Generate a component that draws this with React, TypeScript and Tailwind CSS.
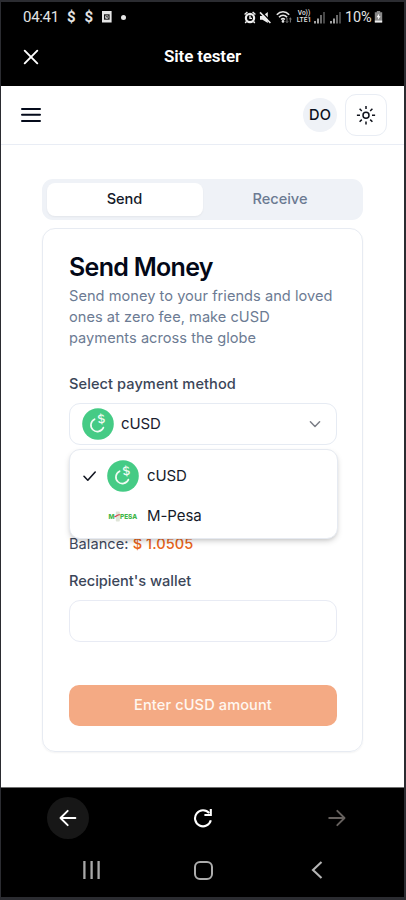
import React from 'react';

const inter = "font-['Inter','Liberation_Sans',sans-serif]";
const roboto = "font-['Roboto','Liberation_Sans',sans-serif]";

function CusdLogo() {
  return (
    <svg width="32" height="32" viewBox="0 0 32 32" className="shrink-0">
      <circle cx="16" cy="16" r="15.8" fill="#45cb85" />
      <path d="M12.6 11.2A6.5 6.5 0 1 0 21.4 19.6" fill="none" stroke="#f1fbf3" strokeWidth="1.7" strokeLinecap="round" />
      <text x="19.2" y="15.2" textAnchor="middle" fontFamily="Inter, sans-serif" fontSize="12" fontWeight="500" fill="#f1fbf3" transform="rotate(-8 19.2 11)">$</text>
    </svg>
  );
}

function MpesaLogo() {
  return (
    <svg width="32" height="16" viewBox="0 0 32 16" className="shrink-0">
      <rect x="8.8" y="3.6" width="4" height="10" rx="0.8" fill="#dfe5d8" />
      <g fontFamily="Inter, sans-serif" fontSize="6.8" fontWeight="800" fill="#42b649">
        <text x="1.4" y="10.5" textLength="6" lengthAdjust="spacingAndGlyphs">M</text>
        <text x="13" y="10.5" textLength="17.2" lengthAdjust="spacingAndGlyphs">PESA</text>
      </g>
      <path d="M7.4 8.7C9 8.7 9.8 6.8 12.8 6.6" fill="none" stroke="#d8434e" strokeWidth="1.3" />
    </svg>
  );
}

function Signal() {
  return (
    <svg width="11" height="13" viewBox="0 0 11 13" className="shrink-0">
      <path d="M1 12.5V10M4 12.5V7.5" stroke="#e6e6e6" strokeWidth="1.4" />
      <path d="M7 12.5V4" stroke="#a0a0a0" strokeWidth="1.3" />
      <path d="M10 12.5V1" stroke="#6c6c6c" strokeWidth="1.3" />
    </svg>
  );
}

function StatusBar() {
  return (
    <div className={`${roboto} flex h-[30px] items-center pl-[22px] pr-[21px] text-[#e4e4e4]`}>
      <span className="w-[44px] text-[15px] leading-5 tracking-[-0.3px]">04:41</span>
      <span className="w-[17.5px] text-[15px] font-bold leading-5">$</span>
      <span className="w-[17px] text-[15px] font-bold leading-5">$</span>
      <svg width="10" height="12" viewBox="0 0 10 12">
        <rect width="9.6" height="11.5" fill="#e6e6e6" />
        <path d="M2 3.3h5.6v5.4H2z" fill="#171717" />
        <circle cx="4.8" cy="6" r="1.9" fill="#bdbdbd" />
        <path d="M4.8 4.5V6H6" stroke="#111" strokeWidth=".8" fill="none" />
      </svg>
      <span className="ml-[9px] size-[5px] rounded-full bg-[#e6e6e6]" />
      <div className="ml-auto flex items-center">
        <svg width="12" height="13" viewBox="0 0 12 13">
          <circle cx="6" cy="7" r="4.1" fill="none" stroke="#eee" strokeWidth="2.2" />
          <path d="M.6 3.5 3.4 1M11.4 3.5 8.6 1M2.5 10.5 1.2 12M9.5 10.5l1.3 1.5M6 4.6V7.4h2" fill="none" stroke="#eee" strokeWidth="1.4" />
        </svg>
        <svg width="13" height="13" viewBox="0 0 13 13" className="ml-[3px]">
          <path d="M1 5h2.5L8.8 1v11L3.5 8.7H1z" fill="#eee" />
          <path d="M2.2 .6 12.4 11.1" stroke="#000" strokeWidth="1.4" />
          <path d="M1 1.4 11.4 12" stroke="#eee" strokeWidth="1.5" />
        </svg>
        <svg width="17" height="14" viewBox="0 0 17 14" className="ml-[4px]">
          <path d="M.8 4.7C4.4.8 9.6.8 13.2 4.7M3 7.2c2.5-2.7 5.7-2.7 8.1 0M5.1 9.5c1.2-1.2 2.6-1.2 3.8 0" fill="none" stroke="#e4e4e4" strokeWidth="1.6" />
          <circle cx="7" cy="11.4" r="1.3" fill="#e4e4e4" />
          <path d="M11 8v4.5M9.8 11.3 11 12.6l1.2-1.3M14.4 12.5V8M13.2 9.2 14.4 8l1.2 1.2" fill="none" stroke="#777" strokeWidth="1" />
        </svg>
        <span className="ml-[3px] flex w-[16px] flex-col items-center text-[6.6px] font-semibold leading-[7px] text-[#dedede]">
          <span className="h-[7px]">Vo))</span>
          <span className="h-[7px]">LTE1</span>
        </span>
        <span className="ml-[2px] flex gap-[5px]"><Signal /><Signal /></span>
        <span className="ml-[4px] mt-px w-[29px] text-[14.5px] leading-5 tracking-[-0.2px]">10%</span>
        <svg width="9" height="12" viewBox="0 0 9 12">
          <path d="M2.8 0h3.4v1.2h2V10.5H.8V1.2h2z" fill="#888" />
          <path d="M.8 9.6h7.4v2H.8z" fill="#eee" />
          <path d="M5.2 2.5 2.5 6.3h1.8L3.8 9l2.7-3.8H4.8z" fill="#fff" />
        </svg>
      </div>
    </div>
  );
}

function TitleBar() {
  return (
    <div className="grid h-[54px] grid-cols-[1fr_auto_1fr] items-center pb-1 pl-[22px] pr-[22px]">
      <svg width="16" height="16" viewBox="0 0 16 16" className="-mt-px">
        <path d="m1.7 1.7 12.6 12.6M14.3 1.7 1.7 14.3" stroke="#fff" strokeWidth="1.9" strokeLinecap="round" />
      </svg>
      <span className={`${roboto} -mt-[2px] text-[17px] font-semibold leading-5 tracking-[-0.15px] text-white`}>Site tester</span>
    </div>
  );
}

function Header() {
  return (
    <header className="flex h-[59px] items-center border-b border-[#e9edf5] pl-[20px] pr-[17px]">
      <svg width="20" height="16" viewBox="0 0 20 16">
        <path d="M1 2h18M1 7.7h18M1 14h18" stroke="#050b1b" strokeWidth="2" strokeLinecap="round" />
      </svg>
      <span className="ml-auto flex size-[34px] items-center justify-center rounded-full bg-[#eff2f7] pt-px text-[14.6px] font-medium tracking-[0.1px] text-[#0b1020]">DO</span>
      <button className="ml-[8px] flex size-[42px] items-center justify-center rounded-[11px] border border-[#e9edf4]">
        <svg width="20" height="20" viewBox="0 0 20 20" fill="none" stroke="#10131c" strokeWidth="1.5">
          <circle cx="10" cy="10.3" r="3" />
          <path d="M10 1v3M10 16.4v3M.9 10.2h3.1M16 10.2h3.1M3.6 3.8l2.2 2.2M14.2 14.6l2.2 2.2M3.6 16.8l2.2-2.2M14.2 6l2.2-2.2" />
        </svg>
      </button>
    </header>
  );
}

function PaymentSelect() {
  return (
    <div className="relative mt-[9px]">
      <div className="flex h-[42px] items-center rounded-[11px] border border-[#e6ebf3] pl-[12px] pr-[13px]">
        <CusdLogo />
        <span className="ml-[7px] text-[15px] leading-5 tracking-[-0.1px] text-[#1a2030]">cUSD</span>
        <svg width="16" height="16" viewBox="0 0 16 16" className="ml-auto">
          <path d="m3.4 5.7 4.6 4.7 4.6-4.7" fill="none" stroke="#7b7e86" strokeWidth="1.5" strokeLinecap="round" strokeLinejoin="round" />
        </svg>
      </div>
      <div className="absolute left-0 right-[-1px] top-[46px] z-10 h-[90px] rounded-[11px] border border-[#e6eaf1] bg-white pt-[5px] text-[15px] text-[#151b2a] shadow-[0_3px_6px_-1px_rgba(0,0,0,0.18),0_2px_4px_-2px_rgba(0,0,0,0.12)]">
        <div className="flex h-[42px] items-center pl-[12px]">
          <svg width="16" height="16" viewBox="0 0 16 16" className="mr-[9px]">
            <path d="m2 8.3 3.8 3.9 7.4-8.2" fill="none" stroke="#131722" strokeWidth="1.6" strokeLinecap="round" strokeLinejoin="round" />
          </svg>
          <CusdLogo />
          <span className="ml-[8px] leading-5 tracking-[-0.1px]">cUSD</span>
        </div>
        <div className="flex h-[37px] items-center pl-[37px]">
          <MpesaLogo />
          <span className="ml-[8px] leading-5 tracking-[-0.05px]">M-Pesa</span>
        </div>
      </div>
    </div>
  );
}

function SendCard() {
  return (
    <section className="mt-[8px] h-[524px] rounded-[13px] border border-[#e7ebf2] pl-[26px] pr-[25px] pt-[26px] shadow-[0_1px_2px_rgba(0,0,0,0.05)]">
      <h1 className="h-[25px] whitespace-nowrap text-[25px] font-semibold leading-[24px] tracking-[-0.7px] text-[#030817]">Send Money</h1>
      <p className="mt-[6px] whitespace-nowrap text-[14.6px] leading-[21px] tracking-[0.03px] text-[#6c7b93]">
        Send money to your friends and loved<br />ones at zero fee, make cUSD<br />payments across the globe
      </p>
      <div className="mt-[25px] h-5 whitespace-nowrap text-[14.6px] font-medium leading-5 tracking-[0.07px] text-[#3b4659]">Select payment method</div>
      <PaymentSelect />
      <div className="mt-[89px] h-5 whitespace-nowrap text-[14.6px] leading-5 tracking-[0.05px] text-[#3d475a]">
        Balance: <span className="font-medium text-[#e8641b]">$ 1.0505</span>
      </div>
      <div className="mt-[17px] h-5 whitespace-nowrap text-[14.6px] font-medium leading-5 tracking-[-0.02px] text-[#3b4659]">Recipient's wallet</div>
      <div className="mt-[9px] h-[42px] rounded-[11px] border border-[#e8ebf4]" />
      <button className="mt-[43px] flex h-[41px] w-full items-center justify-center rounded-[10px] bg-[#f4aa84] text-[14.6px] font-medium tracking-[0.1px] text-[#fff7f0]">Enter cUSD amount</button>
    </section>
  );
}

function BottomBars() {
  return (
    <footer className="h-[110px] border-t border-[#707070] bg-black">
      <div className="flex items-center pl-[46px] pr-[58px] pt-[9px]">
        <span className="flex size-[42px] items-center justify-center rounded-full bg-[#171717]">
          <svg width="18" height="18" viewBox="0 0 18 18" fill="none" stroke="#fff" strokeWidth="1.9" strokeLinecap="round" strokeLinejoin="round">
            <path d="M16.4 9H1.5M8.7 1.8 1.5 9l7.2 7.2" />
          </svg>
        </span>
        <svg width="20" height="20" viewBox="0 0 20 20" className="ml-[104px]" fill="none" stroke="#fff" strokeWidth="2.1">
          <path d="M16.2 5.2A8 8 0 1 0 17.8 12.2" />
          <path d="M17.8 1v6h-6.4" />
        </svg>
        <svg width="18" height="18" viewBox="0 0 18 18" className="ml-auto" fill="none" stroke="#66615e" strokeWidth="1.9" strokeLinecap="round" strokeLinejoin="round">
          <path d="M1.2 9h15.2M9.3 1.8 16.5 9l-7.2 7.2" />
        </svg>
      </div>
      <div className="flex h-[62px] items-center pl-[81px] pr-[81px]">
        <svg width="20" height="18" viewBox="0 0 20 18" stroke="#a8a8a8" strokeWidth="2.3">
          <path d="M2.4 0v18M9.6 0v18M16.6 0v18" />
        </svg>
        <span className="ml-[92px] size-[19px] rounded-[6px] border-2 border-[#adadad]" />
        <svg width="12" height="18" viewBox="0 0 12 18" className="ml-auto" fill="none" stroke="#b5b5b5" strokeWidth="2.1">
          <path d="M10.5 1 2 9l8.5 8" />
        </svg>
      </div>
    </footer>
  );
}

export default function App() {
  return (
    <div className={`${inter} h-[900px] w-[406px] overflow-hidden bg-[#2b2c31] pb-[3px] pl-px pr-[2px] pt-[2px]`}>
      <div className="flex h-[895px] flex-col bg-white">
        <div className="h-[84px] bg-black">
          <StatusBar />
          <TitleBar />
        </div>
        <Header />
        <main className="h-[642px] px-[41px] pt-[34px]">
          <div className="flex h-[41px] rounded-[11px] bg-[#eff2f7] p-[4px] pl-[5px] text-[14.6px] font-medium tracking-[-0.05px]">
            <span className="flex w-[156px] items-center justify-center rounded-[8px] bg-white pr-px text-[#141929] shadow-[0_1px_2px_rgba(0,0,0,0.05)]">Send</span>
            <span className="flex flex-1 items-center justify-center pr-[2px] text-[#6b7a92]">Receive</span>
          </div>
          <SendCard />
        </main>
        <BottomBars />
      </div>
    </div>
  );
}
